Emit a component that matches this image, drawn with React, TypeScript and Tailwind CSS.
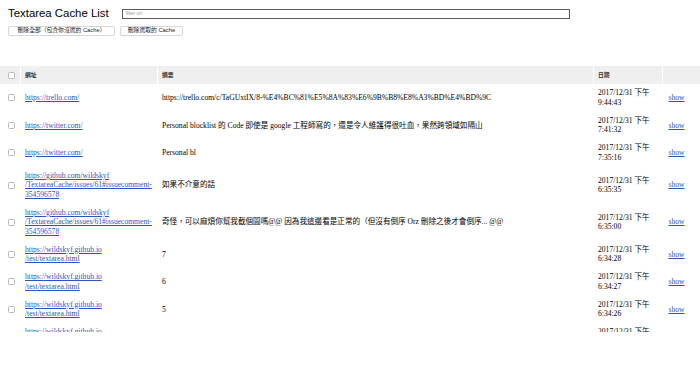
import React from "react";

type Row = {
  url: string[];
  summary: string;
  time: string;
};

const rows: Row[] = [
  {
    url: ["https://trello.com/"],
    summary:
      "https://trello.com/c/TaGUxtIX/8-%E4%BC%81%E5%8A%83%E6%9B%B8%E8%A3%BD%E4%BD%9C",
    time: "9:44:43",
  },
  {
    url: ["https://twitter.com/"],
    summary:
      "Personal blocklist 的 Code 即使是 google 工程師寫的，還是令人維護得很吐血，果然跨領域如隔山",
    time: "7:41:32",
  },
  { url: ["https://twitter.com/"], summary: "Personal bl", time: "7:35:16" },
  {
    url: [
      "https://github.com/wildskyf",
      "/TextareaCache/issues/61#issuecomment-",
      "354596578",
    ],
    summary: "如果不介意的話",
    time: "6:35:35",
  },
  {
    url: [
      "https://github.com/wildskyf",
      "/TextareaCache/issues/61#issuecomment-",
      "354596578",
    ],
    summary:
      "奇怪，可以麻煩你幫我截個圖嗎@@ 因為我這邊看是正常的（但沒有倒序 Orz 刪除之後才會倒序... @@",
    time: "6:35:00",
  },
  {
    url: ["https://wildskyf.github.io", "/test/textarea.html"],
    summary: "7",
    time: "6:34:28",
  },
  {
    url: ["https://wildskyf.github.io", "/test/textarea.html"],
    summary: "6",
    time: "6:34:27",
  },
  {
    url: ["https://wildskyf.github.io", "/test/textarea.html"],
    summary: "5",
    time: "6:34:26",
  },
  {
    url: ["https://wildskyf.github.io", "/test/textarea.html"],
    summary: "4",
    time: "6:34:25",
  },
];

function Box() {
  return (
    <span className="block w-[7px] h-[7px] rounded-[1.5px] border border-[#b8b8b8] bg-white ml-[8px]" />
  );
}

export default function App() {
  return (
    <div className="w-[700px] h-[381px] bg-white overflow-hidden relative">
      <div className="flex items-center pt-[7px] pl-[8px]">
        <h1 className="text-[11.4px] leading-[13px] text-black [font-family:'Liberation_Sans',Arial,sans-serif]">
          Textarea Cache List
        </h1>
        <div className="ml-[13px] w-[448px] h-[10px] border border-[#5a5a5a] bg-white flex items-center pl-[3px]">
          <span className="text-[5px] leading-none text-[#9a9a9a] [font-family:'Liberation_Sans',Arial,sans-serif]">
            filter url
          </span>
        </div>
      </div>
      <div className="flex gap-[5px] pl-[8px] mt-[6px] [font-family:'Liberation_Sans','Noto_Sans_CJK_TC',sans-serif]">
        <button className="w-[107px] h-[10px] rounded-[2px] border border-[#d6d6d6] bg-white text-[5.8px] leading-none text-[#222] flex items-center justify-center">
          刪除全部（包含你沒選的 Cache）
        </button>
        <button className="w-[63px] h-[10px] rounded-[2px] border border-[#d6d6d6] bg-white text-[5.8px] leading-none text-[#222] flex items-center justify-center">
          刪除選取的 Cache
        </button>
      </div>
      <div className="mt-[30px] h-[266px] overflow-hidden">
        <div className="grid grid-cols-[20px_136px_435px_68px_1fr] gap-x-px h-[18px] [font-family:'Liberation_Sans','Noto_Sans_CJK_TC',sans-serif] text-[5.8px] font-bold text-[#333]">
          <div className="bg-[#efefef] flex items-center">
            <Box />
          </div>
          <div className="bg-[#efefef] flex items-center pl-[4px]">網址</div>
          <div className="bg-[#efefef] flex items-center pl-[4px]">摘要</div>
          <div className="bg-[#efefef] flex items-center pl-[4px]">日期</div>
          <div className="bg-[#efefef]" />
        </div>
        {rows.map((r, i) => (
          <div
            key={i}
            className="grid grid-cols-[20px_136px_435px_68px_1fr] gap-x-px items-center py-[4.25px] text-[7.6px] leading-[9.5px] text-black [font-family:'Liberation_Serif','Noto_Sans_CJK_TC',serif]"
          >
            <div className="flex items-center">
              <Box />
            </div>
            <div className="pl-[4px]">
              <a className="text-[#2b55c4] underline decoration-[0.5px] underline-offset-[1px]">
                {r.url.map((u, j) => (
                  <span key={j} className="block whitespace-nowrap">
                    {u}
                  </span>
                ))}
              </a>
            </div>
            <div className="pl-[4px] whitespace-nowrap">{r.summary}</div>
            <div className="pl-[4px]">
              <span className="block whitespace-nowrap">2017/12/31 下午</span>
              <span className="block">{r.time}</span>
            </div>
            <div className="pl-[5.5px]">
              <a className="text-[#2b55c4] underline decoration-[0.5px] underline-offset-[1px]">
                show
              </a>
            </div>
          </div>
        ))}
      </div>
    </div>
  );
}
